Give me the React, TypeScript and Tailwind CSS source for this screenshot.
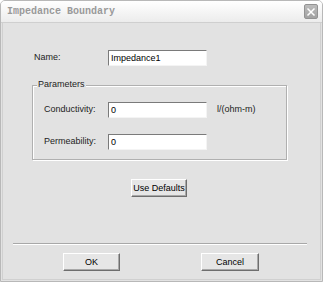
import React from "react";

const sans = { fontFamily: '"Liberation Sans", Arial, sans-serif' };

function Input({ value }: { value: string }) {
  return (
    <div className="w-[99px] h-[16px] bg-white border-t-[1px] border-l-[1px] border-t-[#7a7a7a] border-l-[#7a7a7a] border-b border-r border-b-[#f4f4f4] border-r-[#f4f4f4] flex items-center pl-[2px] text-[9px] text-black leading-none">
      {value}
    </div>
  );
}

function Btn({ label, w }: { label: string; w: string }) {
  return (
    <div className={`${w} h-[18px] bg-[#e6e6e6] border border-t-white border-l-white border-r-[#6e6e6e] border-b-[#6e6e6e] shadow-[inset_-1px_-1px_0_#a8a8a8] flex items-center justify-center text-[9px] text-black leading-none`}>
      {label}
    </div>
  );
}

export default function App() {
  return (
    <div className="w-[323px] h-[282px] bg-white" style={sans}>
      <div className="w-[323px] h-[282px] flex flex-col border border-[#b8b8b8] rounded-t-[5px] bg-[#e2e2e2] overflow-hidden">
        <div className="h-[22px] flex items-center justify-between pl-[6px] pr-[4px] bg-gradient-to-b from-[#ffffff] to-[#ececec] border-b border-[#cfcfcf]">
          <span className="text-[10px] font-bold text-[#9a9a9a]" style={{ fontFamily: '"Liberation Mono", "DejaVu Sans Mono", monospace' }}>
            Impedance Boundary
          </span>
          <div className="w-[14px] h-[15px] bg-gradient-to-b from-[#bcbcbc] to-[#a2a2a2] border border-[#939393] rounded-[2px] flex items-center justify-center">
            <svg width="10" height="10" viewBox="0 0 10 10">
              <path d="M1.5 1.5 L8.5 8.5 M8.5 1.5 L1.5 8.5" stroke="#ffffff" strokeWidth="1.5" />
            </svg>
          </div>
        </div>
        <div className="flex-1 flex flex-col mx-[1px] mb-[1px] border-l border-r border-b border-[#d0d0d0]">
          <div className="flex items-center mt-[27px] ml-[31px]">
            <span className="w-[74px] text-[9px] text-[#222]">Name:</span>
            <Input value="Impedance1" />
          </div>
          <div className="relative mt-[19px] ml-[29px] w-[255px] h-[75px] border border-[#b0b0b0] shadow-[inset_1px_1px_0_#fff,1px_1px_0_#fff]">
            <span className="absolute -top-[6px] left-[4px] px-[1px] bg-[#e2e2e2] text-[9px] leading-none text-[#222]">Parameters</span>
            <div className="flex items-center mt-[16px] ml-[11px]">
              <span className="w-[64px] text-[9px] text-[#222]">Conductivity:</span>
              <Input value="0" />
              <span className="ml-[10px] text-[9px] text-[#222]">l/(ohm-m)</span>
            </div>
            <div className="flex items-center mt-[16px] ml-[11px]">
              <span className="w-[64px] text-[9px] text-[#222]">Permeability:</span>
              <Input value="0" />
            </div>
          </div>
          <div className="flex mt-[19px] ml-[128px]">
            <Btn label="Use Defaults" w="w-[56px]" />
          </div>
          <div className="mt-[46px] ml-[10px] mr-[13px] h-[2px] border-t border-[#a8a8a8] border-b border-b-white" />
          <div className="flex mt-[8px]">
            <div className="ml-[60px]"><Btn label="OK" w="w-[57px]" /></div>
            <div className="ml-[81px]"><Btn label="Cancel" w="w-[58px]" /></div>
          </div>
        </div>
      </div>
    </div>
  );
}
